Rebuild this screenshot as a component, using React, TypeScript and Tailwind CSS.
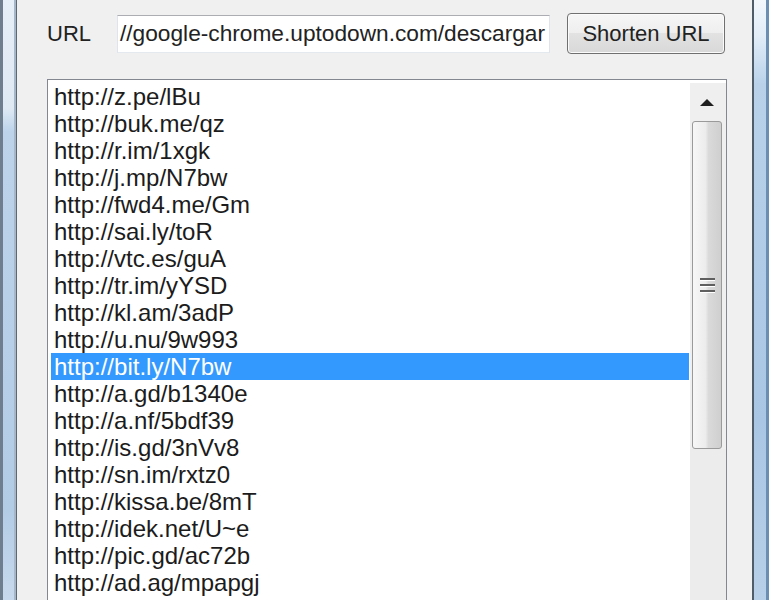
import { useState } from 'react'

const urls = [
  'http://z.pe/lBu',
  'http://buk.me/qz',
  'http://r.im/1xgk',
  'http://j.mp/N7bw',
  'http://fwd4.me/Gm',
  'http://sai.ly/toR',
  'http://vtc.es/guA',
  'http://tr.im/yYSD',
  'http://kl.am/3adP',
  'http://u.nu/9w993',
  'http://bit.ly/N7bw',
  'http://a.gd/b1340e',
  'http://a.nf/5bdf39',
  'http://is.gd/3nVv8',
  'http://sn.im/rxtz0',
  'http://kissa.be/8mT',
  'http://idek.net/U~e',
  'http://pic.gd/ac72b',
  'http://ad.ag/mpapgj',
  'http://cli.gs/t7UvBx',
]

function ScrollBar() {
  return (
    <div className="flex w-[36px] shrink-0 flex-col bg-[#efefef]">
      {/* up arrow */}
      <div className="flex h-[38px] items-center justify-center pr-[2px]">
        <svg width="14" height="7" viewBox="0 0 14 7">
          <path d="M0 7 L7 0 L14 7 Z" fill="#1f1f1f" />
        </svg>
      </div>
      {/* thumb */}
      <div className="ml-[2px] mr-[4px] flex h-[328px] items-center justify-center rounded-[3px] border border-[#9a9a9a] bg-[linear-gradient(to_right,#f7f7f7_0%,#ececec_45%,#dadada_55%,#cfcfcf_100%)]">
        <div className="flex flex-col gap-[3px]">
          <div className="h-[3px] w-[15px] border-b border-white bg-[#5f5f5f]" />
          <div className="h-[3px] w-[15px] border-b border-white bg-[#5f5f5f]" />
          <div className="h-[3px] w-[15px] border-b border-white bg-[#5f5f5f]" />
        </div>
      </div>
      <div className="flex-1 bg-[#ececec]" />
    </div>
  )
}

export default function App() {
  const [selected, setSelected] = useState(10)

  return (
    <div className="flex h-[600px] w-[769px] overflow-hidden bg-[#f0f0f0] font-['Liberation_Sans',Arial,sans-serif] text-[#1c1c1c]">
      {/* left window frame */}
      <div className="flex w-[17px] shrink-0">
        <div className="w-[3px] bg-[#6f7e8e]" />
        <div className="w-[11px] bg-[linear-gradient(to_bottom,#e6eef7_0%,#dfe9f4_18%,#bcd3ea_22%,#b3cce6_85%,#c7d9ec_100%)]" />
        <div className="w-[2px] bg-[#a6b7c9]" />
        <div className="w-[1px] bg-[#5b6774]" />
      </div>

      {/* client area */}
      <div className="flex flex-1 flex-col pl-[30px]">
        <div className="flex items-center pt-[13px]">
          <span className="text-[22px] leading-none text-[#222]">URL</span>
          <div className="ml-[26px] flex h-[38px] w-[433px] items-center overflow-hidden border border-t-[#abadb3] border-x-[#e2e3ea] border-b-[#e3e9ef] bg-white pl-[2px] text-[22.7px] whitespace-nowrap text-[#222]">
            //google-chrome.uptodown.com/descargar
          </div>
          <button className="ml-[17px] h-[41px] w-[158px] rounded-[4px] border border-[#707070] bg-[linear-gradient(to_bottom,#f6f6f6_0%,#eeeeee_50%,#e2e2e2_50%,#d8d8d8_100%)] text-[22px] text-[#222] shadow-[inset_0_0_0_1px_#fbfbfb]">
            Shorten URL
          </button>
        </div>

        {/* list box */}
        <div className="mt-[25px] flex h-[560px] w-[680px] border border-[#828790] bg-white pt-[3px]">
          <div className="flex-1 pl-[3px] pr-[1px]">
            {urls.map((url, i) => (
              <div
                key={url}
                onClick={() => setSelected(i)}
                className={
                  i === selected
                    ? 'h-[27px] bg-[#3399ff] pl-[3px] text-[24px] leading-[27px] whitespace-nowrap text-white'
                    : 'h-[27px] pl-[3px] text-[24px] leading-[27px] whitespace-nowrap'
                }
              >
                {url}
              </div>
            ))}
          </div>
          <ScrollBar />
        </div>
      </div>

      {/* right window frame */}
      <div className="flex w-[17px] shrink-0">
        <div className="w-[2px] bg-[#4f5d6b]" />
        <div className="w-[12px] bg-[linear-gradient(to_bottom,#f2f7fc_0%,#e2edf8_6%,#b9d2ea_14%,#a9c6e4_70%,#b8d0e8_100%)]" />
        <div className="w-[3px] bg-[#6b8fb3]" />
      </div>
    </div>
  )
}
